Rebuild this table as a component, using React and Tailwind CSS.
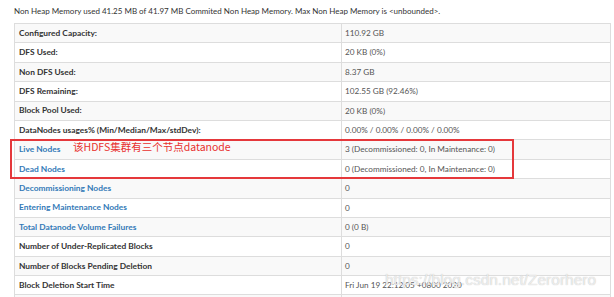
import React from "react";

const rows = [
  { label: "Configured Capacity:", value: "110.92 GB" },
  { label: "DFS Used:", value: "20 KB (0%)" },
  { label: "Non DFS Used:", value: "8.37 GB" },
  { label: "DFS Remaining:", value: "102.55 GB (92.46%)" },
  { label: "Block Pool Used:", value: "20 KB (0%)" },
  { label: "DataNodes usages% (Min/Median/Max/stdDev):", value: "0.00% / 0.00% / 0.00% / 0.00%" },
  { label: "Live Nodes", value: "3 (Decommissioned: 0, In Maintenance: 0)", link: true },
  { label: "Dead Nodes", value: "0 (Decommissioned: 0, In Maintenance: 0)", link: true },
  { label: "Decommissioning Nodes", value: "0", link: true },
  { label: "Entering Maintenance Nodes", value: "0", link: true },
  { label: "Total Datanode Volume Failures", value: "0 (0 B)", link: true },
  { label: "Number of Under-Replicated Blocks", value: "0" },
  { label: "Number of Blocks Pending Deletion", value: "0" },
  { label: "Block Deletion Start Time", value: "Fri Jun 19 22:12:05 +0800 2020" },
  { label: "", value: "" },
];

export default function App() {
  return (
    <div className="relative h-[297px] w-[614px] overflow-hidden bg-white font-['Lato',sans-serif] text-[#333]">
      <p className="pl-[14px] pt-[5px] text-[8px] leading-[12px]">
        Non Heap Memory used 41.25 MB of 41.97 MB Commited Non Heap Memory. Max Non Heap Memory is &lt;unbounded&gt;.
      </p>

      <table className="ml-[14px] mt-[6px] w-[597px] border-collapse">
        <tbody>
          {rows.map((r, i) => (
            <tr key={i} className={`h-[19.4px] ${i % 2 === 0 ? "bg-[#f9f9f9]" : "bg-white"}`}>
              <th
                className={`w-[327px] border border-[#ddd] px-[4px] py-0 text-left text-[8.4px] font-bold ${
                  r.link ? "text-[#337ab7]" : "text-[#333]"
                }`}
              >
                {r.label}
              </th>
              <td className="border border-[#ddd] px-[3px] py-0 text-[8.2px] text-[#555]">{r.value}</td>
            </tr>
          ))}
        </tbody>
      </table>

      {/* annotation */}
      <div className="absolute left-[10px] top-[139px] h-[40px] w-[504px] border-2 border-[#e5383b]" />
      <span className="absolute left-[73px] top-[139px] text-[10.5px] leading-[15px] text-[#e8312f] font-['Noto_Sans_CJK_SC','Noto_Sans',sans-serif]">
        该HDFS集群有三个节点datanode
      </span>

      <span className="pointer-events-none absolute left-[385px] top-[270px] font-['Liberation_Sans',sans-serif] text-[15.5px] leading-[20px] text-white/70 [text-shadow:0_0_1px_#b5b5b5]">
        https://blog.csdn.net/Zerorhero
      </span>
    </div>
  );
}
